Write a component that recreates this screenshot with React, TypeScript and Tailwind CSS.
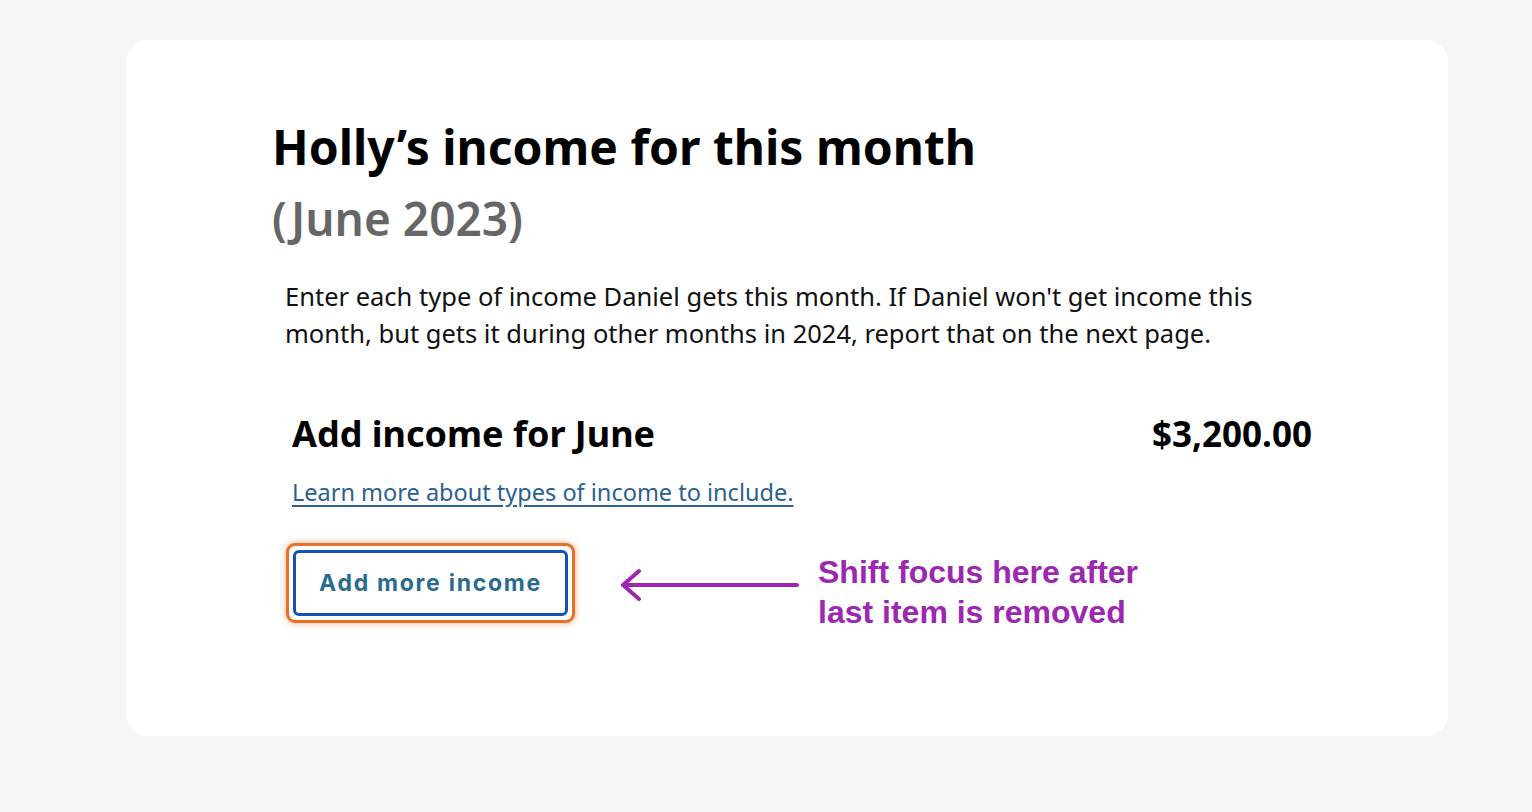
export default function App() {
  return (
    <div className="min-h-screen bg-[#f6f6f6] pt-[40px] pl-[126px] font-['Noto_Sans',sans-serif]">
      <div className="w-[1322px] h-[696px] bg-white rounded-[22px] pl-[146px] pt-[71px]">
        <h1 className="text-[48px] font-bold leading-[72px] text-black">Holly’s income for this month</h1>
        <div className="mt-[2px] text-[46px] font-semibold leading-[66px] text-[#666666]">(June 2023)</div>

        <p className="mt-[27px] ml-[13px] w-[1000px] text-[25.5px] leading-[37px] text-[#111]">
          Enter each type of income Daniel gets this month. If Daniel won't get income this month, but gets it during
          other months in 2024, report that on the next page.
        </p>

        <div className="mt-[56px] ml-[20px] w-[1020px]">
          <div className="flex items-center justify-between">
            <h2 className="text-[36px] font-bold leading-[52px] text-black">Add income for June</h2>
            <span className="text-[35px] font-bold leading-[52px] text-black">$3,200.00</span>
          </div>

          <a href="#" className="mt-[15px] block text-[23.5px] leading-[34px] text-[#2a6190] underline underline-offset-[4px]">
            Learn more about types of income to include.
          </a>

          <div className="mt-[34px] flex items-start">
            <button className="ml-[-6px] rounded-[9px] border-[3px] border-[#e8702a] bg-white p-[4px] shadow-[0_0_6px_rgba(232,112,42,0.6)]">
              <span className="flex h-[66px] w-[275px] items-center justify-center rounded-[6px] border-[3px] border-[#1551b5] text-[23px] font-bold tracking-[0.075em] text-[#2b6a8f] font-['Inter',sans-serif]">
                Add more income
              </span>
            </button>

            <svg width="180" height="40" viewBox="0 0 180 40" className="ml-[44px] mt-[22px]" fill="none">
              <path d="M178 20H4M20 6L4 20L20 34" stroke="#9c27b0" strokeWidth="4" strokeLinecap="round" strokeLinejoin="round" />
            </svg>

            <div className="ml-[19px] mt-[9px] text-[32px] font-bold leading-[40px] text-[#9c27b0] font-['Liberation_Sans',Arial,sans-serif]">
              Shift focus here after
              <br />
              last item is removed
            </div>
          </div>
        </div>
      </div>
    </div>
  );
}
